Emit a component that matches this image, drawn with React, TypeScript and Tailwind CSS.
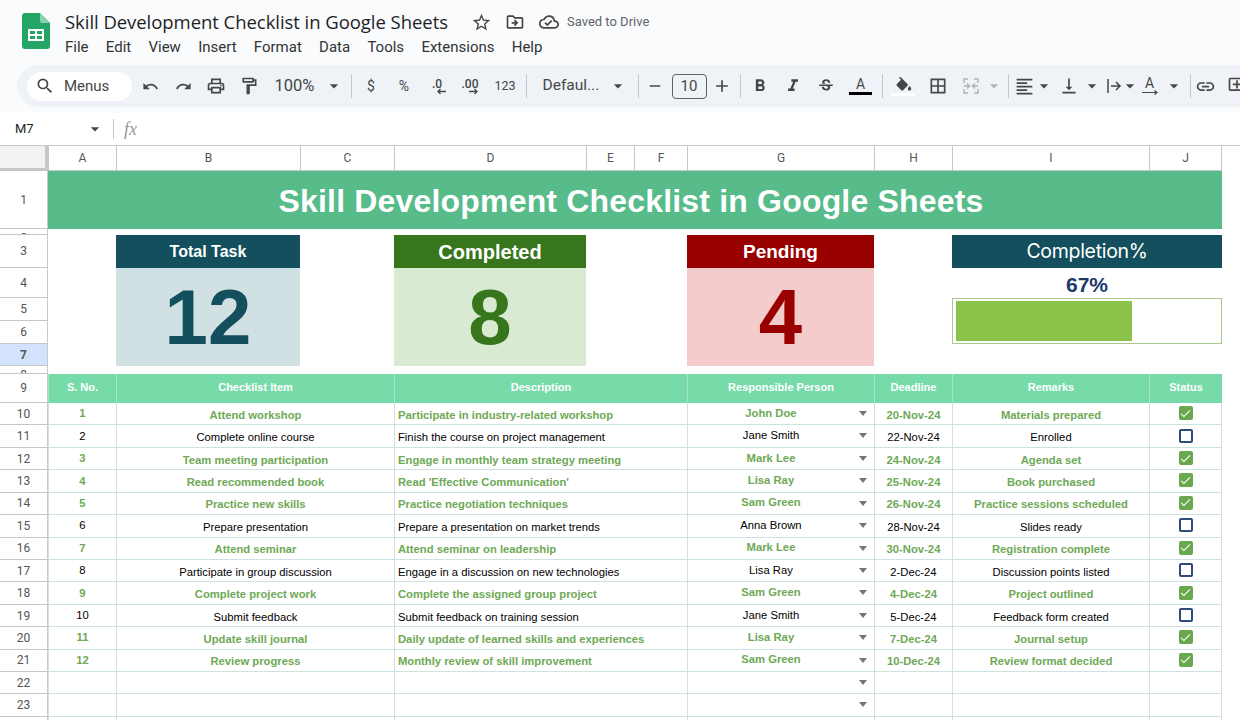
import { ReactNode } from 'react'
import {
  MdStarBorder,
  MdOutlineDriveFileMove,
  MdOutlineCloudDone,
  MdSearch,
  MdUndo,
  MdRedo,
  MdOutlinePrint,
  MdOutlineFormatPaint,
  MdArrowDropDown,
  MdRemove,
  MdAdd,
  MdFormatBold,
  MdFormatItalic,
  MdStrikethroughS,
  MdBorderAll,
  MdFormatAlignLeft,
  MdVerticalAlignBottom,
  MdLink,
  MdOutlineAddComment,
  MdCheck,
} from 'react-icons/md'

const cols = 'grid grid-cols-[48px_68px_184px_94px_192px_48px_53px_187px_78px_197px_73px_18px]'

const rows = [
  [10, '1', 'Attend workshop', 'Participate in industry-related workshop', 'John Doe', '20-Nov-24', 'Materials prepared', true],
  [11, '2', 'Complete online course', 'Finish the course on project management', 'Jane Smith', '22-Nov-24', 'Enrolled', false],
  [12, '3', 'Team meeting participation', 'Engage in monthly team strategy meeting', 'Mark Lee', '24-Nov-24', 'Agenda set', true],
  [13, '4', 'Read recommended book', "Read 'Effective Communication'", 'Lisa Ray', '25-Nov-24', 'Book purchased', true],
  [14, '5', 'Practice new skills', 'Practice negotiation techniques', 'Sam Green', '26-Nov-24', 'Practice sessions scheduled', true],
  [15, '6', 'Prepare presentation', 'Prepare a presentation on market trends', 'Anna Brown', '28-Nov-24', 'Slides ready', false],
  [16, '7', 'Attend seminar', 'Attend seminar on leadership', 'Mark Lee', '30-Nov-24', 'Registration complete', true],
  [17, '8', 'Participate in group discussion', 'Engage in a discussion on new technologies', 'Lisa Ray', '2-Dec-24', 'Discussion points listed', false],
  [18, '9', 'Complete project work', 'Complete the assigned group project', 'Sam Green', '4-Dec-24', 'Project outlined', true],
  [19, '10', 'Submit feedback', 'Submit feedback on training session', 'Jane Smith', '5-Dec-24', 'Feedback form created', false],
  [20, '11', 'Update skill journal', 'Daily update of learned skills and experiences', 'Lisa Ray', '7-Dec-24', 'Journal setup', true],
  [21, '12', 'Review progress', 'Monthly review of skill improvement', 'Sam Green', '10-Dec-24', 'Review format decided', true],
] as const

function Tool({ children, w = 'w-[33px]' }: { children: ReactNode; w?: string }) {
  return <div className={`${w} h-[42px] shrink-0 flex items-center justify-center text-[#444746]`}>{children}</div>
}

function Sep() {
  return <div className="w-px h-[24px] bg-[#c7c7c7] shrink-0" />
}

function Gap({ w }: { w: string }) {
  return <div className={`${w} shrink-0`} />
}

function Caret({ cls = 'text-[#444746]' }: { cls?: string }) {
  return <MdArrowDropDown size={20} className={`shrink-0 ${cls}`} />
}

function SheetsLogo() {
  return (
    <svg width="28" height="36" viewBox="0 0 28 36" className="shrink-0">
      <path d="M3 0h15l10 10v23a3 3 0 0 1-3 3H3a3 3 0 0 1-3-3V3a3 3 0 0 1 3-3z" fill="#23a566" />
      <path d="M18 0l10 10H20a2 2 0 0 1-2-2z" fill="#8ed1b1" />
      <path d="M6 16h16v12H6z" fill="#fff" />
      <path d="M8 18h5v3H8zM15 18h5v3h-5zM8 23h5v3H8zM15 23h5v3h-5z" fill="#23a566" />
    </svg>
  )
}

function RowHead({ n, cls = '' }: { n: number; cls?: string }) {
  return (
    <div className={`flex items-center justify-center overflow-hidden border-b border-r border-[#c7c7c7] text-[12px] text-[#555] font-['Roboto',sans-serif] ${cls}`}>
      {n}
    </div>
  )
}

function Kpi({ label, value, head, body, text, cls, size }: { label: string; value: string; head: string; body: string; text: string; cls: string; size: string }) {
  return (
    <div className={`${cls} row-start-3 row-span-5 flex flex-col font-['Liberation_Sans',sans-serif]`}>
      <div className={`${head} ${size} h-[33px] pt-[1px] flex items-center justify-center text-white font-bold`}>{label}</div>
      <div className={`${body} ${text} flex-1 flex items-center justify-center text-[78px] font-bold leading-none`}>{value}</div>
    </div>
  )
}

function Check({ on }: { on: boolean }) {
  if (on) {
    return (
      <div className="w-[14px] h-[14px] rounded-[2px] bg-[#6aa84f] flex items-center justify-center">
        <MdCheck size={13} className="text-white" />
      </div>
    )
  }
  return <div className="w-[14px] h-[14px] rounded-[2px] border-2 border-[#2f4b7c]" />
}

function DataRow({ row }: { row: (typeof rows)[number] }) {
  const [n, sno, item, desc, person, date, remark, done] = row
  const tone = done ? 'text-[#6ea956] font-bold' : 'text-black'
  const cell = 'border-b border-l border-[#cfe2e3] flex items-center overflow-hidden whitespace-nowrap'
  return (
    <div className={`${cols} h-[22.43px] text-[11.25px] font-['Liberation_Sans',sans-serif]`}>
      <RowHead n={n} />
      <div className={`${cell} ${tone} justify-center`}>{sno}</div>
      <div className={`${cell} ${tone} col-span-2 justify-center pt-[3px]`}>{item}</div>
      <div className={`${cell} ${tone} col-span-3 pl-[3px] pt-[3px]`}>{desc}</div>
      <div className={`${cell} ${tone} relative justify-center pr-[20px] pb-[1px]`}>
        {person}
        <div className="absolute right-[7px] top-[8px] w-0 h-0 border-x-[4px] border-t-[5px] border-x-transparent border-t-[#757575]" />
      </div>
      <div className={`${cell} ${tone} justify-center pt-[3px]`}>{date}</div>
      <div className={`${cell} ${tone} justify-center pt-[3px]`}>{remark}</div>
      <div className={`${cell} border-r justify-center pb-[1px]`}>
        <Check on={done} />
      </div>
    </div>
  )
}

function EmptyRow({ n }: { n: number }) {
  const cell = 'border-b border-l border-[#cfe2e3]'
  return (
    <div className={`${cols} h-[22.43px]`}>
      <RowHead n={n} />
      <div className={cell} />
      <div className={`${cell} col-span-2`} />
      <div className={`${cell} col-span-3`} />
      <div className={`${cell} relative`}>
        <div className="absolute right-[7px] top-[8px] w-0 h-0 border-x-[4px] border-t-[5px] border-x-transparent border-t-[#757575]" />
      </div>
      <div className={cell} />
      <div className={cell} />
      <div className={`${cell} border-r`} />
    </div>
  )
}

export default function App() {
  const letters = ['A', 'B', 'C', 'D', 'E', 'F', 'G', 'H', 'I', 'J']
  const headCell = 'bg-[#76dba9] border-l border-[#a4e6c6] flex items-center justify-center pb-[2px] text-white font-bold text-[11px]'

  return (
    <div className="w-[1240px] h-[720px] overflow-hidden bg-white font-['Roboto',sans-serif] text-[#1f1f1f]">
      {/* title bar + menus */}
      <div className="h-[65px] bg-[#f9fbfd] flex pl-[22px] pt-[13px]">
        <SheetsLogo />
        <div className="pl-[15px]">
          <div className="h-[18px] flex items-center">
            <span className="text-[18.5px] font-['Open_Sans',sans-serif] tracking-[-0.05px] w-[400px] whitespace-nowrap">Skill Development Checklist in Google Sheets</span>
            <MdStarBorder size={21} className="text-[#444746] ml-[6px]" />
            <MdOutlineDriveFileMove size={20} className="text-[#444746] ml-[13px]" />
            <MdOutlineCloudDone size={20} className="text-[#444746] ml-[14px]" />
            <span className="text-[13px] text-[#5f6368] ml-[8px]">Saved to Drive</span>
          </div>
          <div className="flex gap-[17.25px] mt-[7px] text-[15px] text-[#333] leading-[18px]">
            <span>File</span>
            <span>Edit</span>
            <span>View</span>
            <span>Insert</span>
            <span>Format</span>
            <span>Data</span>
            <span>Tools</span>
            <span>Extensions</span>
            <span>Help</span>
          </div>
        </div>
      </div>

      {/* toolbar */}
      <div className="h-[48px] bg-[#f9fbfd]">
        <div className="ml-[17px] h-[42px] bg-[#eff3f8] rounded-l-[21px] flex items-center pl-[10px] text-[#444746] whitespace-nowrap overflow-hidden">
          <div className="w-[105px] h-[29px] bg-white rounded-full flex items-center pl-[8px] gap-[9px] shrink-0 text-[15px]">
            <MdSearch size={20} />
            <span>Menus</span>
          </div>
          <Gap w="w-[1.5px]" />
          <Tool><MdUndo size={17} /></Tool>
          <Tool><MdRedo size={17} /></Tool>
          <Tool><MdOutlinePrint size={20} /></Tool>
          <Tool><MdOutlineFormatPaint size={20} /></Tool>
          <Tool w="w-[58px]"><span className="text-[16.5px]">100%</span></Tool>
          <Tool w="w-[20px]"><Caret /></Tool>
          <Gap w="w-[7px]" />
          <Sep />
          <Gap w="w-[3px]" />
          <Tool><span className="text-[14px]">$</span></Tool>
          <Tool><span className="text-[14px]">%</span></Tool>
          <Tool>
            <span className="relative text-[12px] font-medium -mt-[4px]">
              .0
              <svg width="9" height="7" viewBox="0 0 9 7" fill="none" stroke="#444746" strokeWidth="1.300" className="absolute left-[5px] top-[13px]">
                <path d="M9 3.500H1M3.500 1L1 3.500 3.500 6" />
              </svg>
            </span>
          </Tool>
          <Tool>
            <span className="relative text-[12px] font-medium -mt-[4px]">
              .00
              <svg width="9" height="7" viewBox="0 0 9 7" fill="none" stroke="#444746" strokeWidth="1.300" className="absolute left-[7px] top-[13px]">
                <path d="M0 3.500h8M5.500 1L8 3.500 5.500 6" />
              </svg>
            </span>
          </Tool>
          <Tool w="w-[37px]"><span className="text-[12.5px]">123</span></Tool>
          <Gap w="w-[2px]" />
          <Sep />
          <Gap w="w-[16px]" />
          <span className="text-[15.5px] w-[65px] shrink-0">Defaul...</span>
          <Caret />
          <Gap w="w-[10px]" />
          <Sep />
          <Tool><MdRemove size={18} /></Tool>
          <div className="w-[35px] h-[25px] shrink-0 border border-[#5f6368] rounded-[4px] flex items-center justify-center text-[15px]">10</div>
          <Tool w="w-[31px]"><MdAdd size={20} /></Tool>
          <Gap w="w-[2px]" />
          <Sep />
          <Gap w="w-[3px]" />
          <Tool><MdFormatBold size={20} /></Tool>
          <Tool><MdFormatItalic size={20} /></Tool>
          <Tool><MdStrikethroughS size={18} /></Tool>
          <Tool w="w-[36px]">
            <div className="flex flex-col items-center">
              <span className="text-[14px] leading-[14px]">A</span>
              <div className="w-[23px] h-[3px] bg-black mt-[1px]" />
            </div>
          </Tool>
          <Gap w="w-[3px]" />
          <Sep />
          <Tool w="w-[40px]">
            <div className="flex flex-col items-center">
              <svg width="18" height="16" viewBox="0 0 22 18" fill="#444746">
                <path d="M16.560 8.940 7.620 0 6.210 1.410l2.380 2.380-5.150 5.150c-.59.59-.59 1.540 0 2.120l5.500 5.500c.29.29.68.44 1.060.44s.77-.15 1.060-.44l5.500-5.500c.59-.58.59-1.530 0-2.120z" />
                <path d="M19 11.500s-2 2.170-2 3.500c0 1.100.9 2 2 2s2-.9 2-2c0-1.330-2-3.500-2-3.500z" />
              </svg>
              <div className="w-[24px] h-[3px] bg-white mt-[1px]" />
            </div>
          </Tool>
          <Tool w="w-[30px]"><MdBorderAll size={20} /></Tool>
          <Tool w="w-[36px]">
            <svg width="18" height="18" viewBox="0 0 18 18" fill="none" stroke="#b0b3b8" strokeWidth="1.500">
              <path d="M2 6V2h4M16 6V2h-4M2 12v4h4M16 12v4h-4M2 9h5M16 9h-5M5 6.500L7.500 9 5 11.500M13 6.500L10.500 9l2.500 2.500" />
            </svg>
          </Tool>
          <Caret cls="text-[#b0b3b8] -ml-[5px]" />
          <Gap w="w-[4px]" />
          <Sep />
          <Gap w="w-[2px]" />
          <Tool w="w-[28px]"><MdFormatAlignLeft size={21} /></Tool>
          <Caret cls="text-[#444746] -ml-[5px]" />
          <Gap w="w-[2px]" />
          <Tool w="w-[26px]"><MdVerticalAlignBottom size={20} /></Tool>
          <Caret />
          <Tool w="w-[24px]">
            <svg width="18" height="18" viewBox="0 0 18 18" fill="none" stroke="#444746" strokeWidth="1.500">
              <path d="M3 2v14M6 9h9M11 5l4 4-4 4" />
            </svg>
          </Tool>
          <Caret cls="text-[#444746] -ml-[6px]" />
          <Tool w="w-[20px]">
            <div className="flex flex-col items-center text-[14px] leading-[13px]">
              A
              <svg width="18" height="5" viewBox="0 0 18 5" fill="none" stroke="#444746" strokeWidth="1.200">
                <path d="M1 2.500h15M13.500 .5l2.500 2-2.500 2" />
              </svg>
            </div>
          </Tool>
          <Gap w="w-[4px]" />
          <Caret />
          <Gap w="w-[6px]" />
          <Sep />
          <Tool w="w-[30px]"><MdLink size={21} /></Tool>
          <Tool><MdOutlineAddComment size={20} /></Tool>
        </div>
      </div>

      {/* name box + formula bar */}
      <div className="h-[33px] flex items-center border-b border-[#c7c7c7] bg-white">
        <span className="ml-[15px] w-[70px] text-[13px]">M7</span>
        <Caret />
        <div className="w-px h-[20px] bg-[#c7c7c7] ml-[8px]" />
        <span className="ml-[10px] text-[18px] italic text-[#999] font-['Liberation_Serif',serif]">fx</span>
      </div>

      {/* column letters */}
      <div className={`${cols} h-[25px]`}>
        <div className="bg-[#f0f2f4] border-r-[3px] border-b-[3px] border-[#c4c7c5]" />
        {letters.map((l) => (
          <div key={l} className="flex items-center justify-center border-l border-b border-[#c7c7c7] text-[12px] text-[#555] last-of-type:border-r">{l}</div>
        ))}
      </div>

      {/* title and kpi cards */}
      <div className={`${cols} grid-rows-[58px_6px_33px_30px_23px_23px_22px_8px]`}>
        <RowHead n={1} cls="col-start-1 row-start-1" />
        <RowHead n={2} cls="col-start-1 row-start-2 items-start text-[10px]" />
        <RowHead n={3} cls="col-start-1 row-start-3" />
        <RowHead n={4} cls="col-start-1 row-start-4" />
        <RowHead n={5} cls="col-start-1 row-start-5" />
        <RowHead n={6} cls="col-start-1 row-start-6" />
        <RowHead n={7} cls="col-start-1 row-start-7 bg-[#d3e3fd] font-bold text-[#0b1f3f]" />
        <RowHead n={8} cls="col-start-1 row-start-8 items-start text-[10px]" />

        <div className="col-start-2 col-span-10 row-start-1 bg-[#57bb8a] flex items-center justify-center pt-[2px] pr-[8px] text-white font-bold text-[32px] font-['Liberation_Sans',sans-serif] tracking-[0.18px]">
          Skill Development Checklist in Google Sheets
        </div>

        <Kpi cls="col-start-3" size="text-[16px]" label="Total Task" value="12" head="bg-[#134f5c]" body="bg-[#d0e0e3]" text="text-[#134f5c]" />
        <Kpi cls="col-start-5" size="text-[20px]" label="Completed" value="8" head="bg-[#38761d]" body="bg-[#d9ead3]" text="text-[#38761d]" />
        <Kpi cls="col-start-8" size="text-[19px]" label="Pending" value="4" head="bg-[#990000]" body="bg-[#f4cccc]" text="text-[#990000]" />

        <div className="col-start-10 col-span-2 row-start-3 row-span-5 flex flex-col">
          <div className="h-[33px] bg-[#134f5c] flex items-center justify-center text-white text-[19.5px] font-['Inter',sans-serif] tracking-[-0.3px]">Completion%</div>
          <div className="h-[30px] pt-[3px] flex items-center justify-center text-[21px] font-bold text-[#1c3a6b] font-['Liberation_Sans',sans-serif]">67%</div>
          <div className="h-[46px] border border-[#a9c98a] px-[3px] py-[2px]">
            <div className="h-full bg-[#8bc34a] w-[67%]" />
          </div>
        </div>
      </div>

      {/* checklist table */}
      <div className={`${cols} h-[29px] font-['Liberation_Sans',sans-serif]`}>
        <RowHead n={9} />
        <div className={headCell}>S. No.</div>
        <div className={`${headCell} col-span-2`}>Checklist Item</div>
        <div className={`${headCell} col-span-3`}>Description</div>
        <div className={headCell}>Responsible Person</div>
        <div className={headCell}>Deadline</div>
        <div className={headCell}>Remarks</div>
        <div className={headCell}>Status</div>
      </div>
      {rows.map((r) => (
        <DataRow key={r[0]} row={r} />
      ))}
      <EmptyRow n={22} />
      <EmptyRow n={23} />
      <EmptyRow n={24} />
    </div>
  )
}
